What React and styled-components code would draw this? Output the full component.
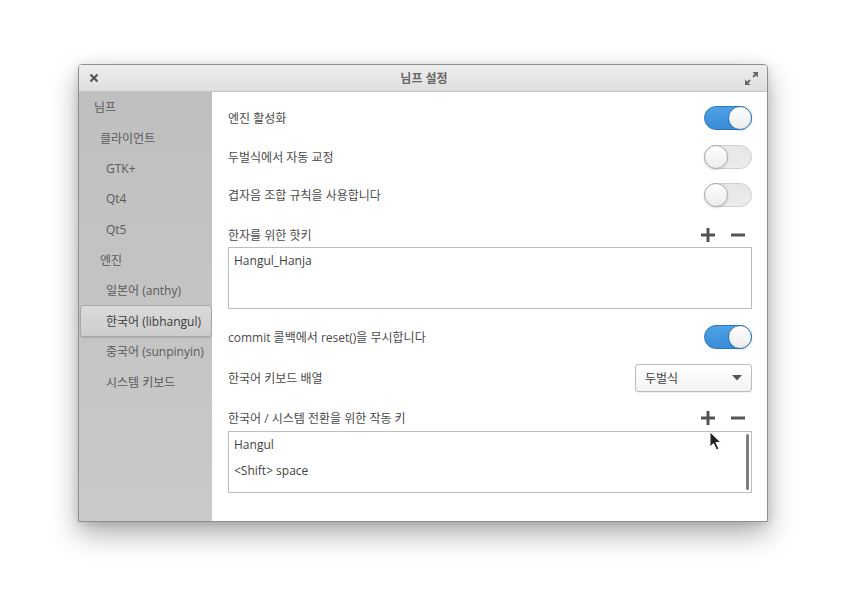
import React from 'react';
import styled, { createGlobalStyle } from 'styled-components';

const GlobalStyle = createGlobalStyle`
  html, body {
    margin: 0;
    padding: 0;
    background: #ffffff;
  }
  body {
    font-family: "Open Sans", "Noto Sans CJK KR", sans-serif;
    font-size: 12px;
    color: #4a4a4a;
  }
`;

const Page = styled.div`
  width: 846px;
  height: 614px;
  padding: 64px 0 0 78px;
  box-sizing: border-box;
`;

const Window = styled.div`
  position: relative;
  width: 690px;
  height: 458px;
  border: 1px solid #8f8f8f;
  border-radius: 4px 4px 0 0;
  box-sizing: border-box;
  display: flex;
  flex-direction: column;
  overflow: hidden;
  box-shadow: 0 12px 28px rgba(0, 0, 0, 0.32), 0 2px 8px rgba(0, 0, 0, 0.12);
`;

const TitleBar = styled.div`
  height: 26px;
  flex: none;
  display: flex;
  align-items: center;
  justify-content: space-between;
  padding: 0 9px 0 10px;
  background: linear-gradient(#eeeeee, #dedede);
  border-bottom: 1px solid #c4c4c4;
`;

const Title = styled.div`
  font-weight: bold;
  color: #666666;
  font-size: 12px;
  padding-left: 4px;
`;

const TitleIcon = styled.svg`
  display: block;
`;

const Body = styled.div`
  flex: 1;
  display: flex;
  min-height: 0;
`;

const Sidebar = styled.div`
  width: 133px;
  flex: none;
  background: linear-gradient(#bfbfbf, #c9c9c9);
  padding-top: 0;
  box-sizing: border-box;
`;

const NavItem = styled.div`
  height: 30.5px;
  display: flex;
  align-items: center;
  white-space: nowrap;
  padding-left: ${(p) => 14 + p.level * 6}px;
  color: ${(p) => (p.selected ? '#3c3c3c' : '#5a5a5a')};
  margin-left: 1px;
  box-sizing: border-box;
  ${(p) =>
    p.selected &&
    `
    height: 32px;
    margin-top: -1px;
    margin-bottom: -0.5px;
    background: linear-gradient(#dadada, #cdcdcd);
    border: 1px solid #a6a6a6;
    border-radius: 3px;
    padding-left: ${13 + p.level * 6}px;
    box-shadow: 0 1px 1px rgba(0,0,0,0.12);
  `}
`;

const Content = styled.div`
  flex: 1;
  background: #ffffff;
  padding: 14px 15px 0 16px;
  position: relative;
`;

const Row = styled.div`
  display: flex;
  align-items: center;
  justify-content: space-between;
  height: ${(p) => p.h || 24}px;
  margin-top: ${(p) => p.mt || 0}px;
`;

const Label = styled.span`
  color: #4a4a4a;
`;

const ToggleTrack = styled.div`
  width: 48px;
  height: 24px;
  border-radius: 12px;
  box-sizing: border-box;
  position: relative;
  background: ${(p) => (p.on ? 'linear-gradient(#4da3e6, #3a8cd6)' : 'linear-gradient(#e6e6e6, #ececec)')};
  border: 1px solid ${(p) => (p.on ? '#2f78bb' : '#cfcfcf')};
`;

const ToggleKnob = styled.div`
  position: absolute;
  top: -1px;
  ${(p) => (p.on ? 'right: -1px;' : 'left: -1px;')}
  width: 24px;
  height: 24px;
  border-radius: 50%;
  box-sizing: border-box;
  background: linear-gradient(#ffffff, #ececec);
  border: 1px solid ${(p) => (p.on ? '#2f78bb' : '#a9a9a9')};
  box-shadow: 0 1px 2px rgba(0, 0, 0, 0.15);
`;

const Toggle = ({ on }) => (
  <ToggleTrack on={on}>
    <ToggleKnob on={on} />
  </ToggleTrack>
);

const IconGroup = styled.div`
  display: flex;
  gap: 16px;
  padding-right: 7px;
`;

const ListBox = styled.div`
  position: relative;
  height: 62px;
  margin-top: ${(p) => p.mt || 0}px;
  border: 1px solid #bdbdbd;
  box-sizing: border-box;
  padding: 0 5px;
`;

const ListItem = styled.div`
  height: 26px;
  line-height: 26px;
  color: #3f3f3f;
`;

const ScrollBar = styled.div`
  position: absolute;
  right: 2px;
  top: 2px;
  bottom: 2px;
  width: 3px;
  border-radius: 2px;
  background: #7d7d7d;
`;

const Select = styled.div`
  width: 117px;
  height: 28px;
  box-sizing: border-box;
  border: 1px solid #bcbcbc;
  border-radius: 3px;
  background: linear-gradient(#ffffff, #f3f3f3);
  display: flex;
  align-items: center;
  justify-content: space-between;
  padding: 0 9px 0 9px;
  color: #3f3f3f;
  box-shadow: 0 1px 1px rgba(0, 0, 0, 0.06);
`;

const Cursor = styled.svg`
  position: absolute;
  left: 497px;
  top: 339px;
`;

const PlusIcon = () => (
  <svg width="14" height="14" viewBox="0 0 14 14">
    <rect x="5.5" y="0" width="3" height="14" fill="#555" />
    <rect x="0" y="5.5" width="14" height="3" fill="#555" />
  </svg>
);

const MinusIcon = () => (
  <svg width="14" height="14" viewBox="0 0 14 14">
    <rect x="0" y="5.5" width="14" height="3" fill="#555" />
  </svg>
);

const nav = [
  { text: '님프', level: 0 },
  { text: '클라이언트', level: 1 },
  { text: 'GTK+', level: 2 },
  { text: 'Qt4', level: 2 },
  { text: 'Qt5', level: 2 },
  { text: '엔진', level: 1 },
  { text: '일본어 (anthy)', level: 2 },
  { text: '한국어 (libhangul)', level: 2, selected: true },
  { text: '중국어 (sunpinyin)', level: 2 },
  { text: '시스템 키보드', level: 2 },
];

export default function App() {
  return (
    <>
      <GlobalStyle />
      <Page>
        <Window>
          <TitleBar>
            <TitleIcon width="10" height="10" viewBox="0 0 10 10">
              <path d="M1.5 1.5 L8.5 8.5 M8.5 1.5 L1.5 8.5" stroke="#555" strokeWidth="2.2" />
            </TitleIcon>
            <Title>님프 설정</Title>
            <TitleIcon width="13" height="13" viewBox="0 0 13 13">
              <path d="M7.5 0 H13 V5.5 Z" fill="#666" />
              <path d="M0 7.5 V13 H5.5 Z" fill="#666" />
              <path d="M10.5 2.5 L8 5 M2.5 10.5 L5 8" stroke="#666" strokeWidth="1.8" />
            </TitleIcon>
          </TitleBar>
          <Body>
            <Sidebar>
              {nav.map((n) => (
                <NavItem key={n.text} level={n.level} selected={n.selected}>
                  {n.text}
                </NavItem>
              ))}
            </Sidebar>
            <Content>
              <Row>
                <Label>엔진 활성화</Label>
                <Toggle on />
              </Row>
              <Row mt={14.5}>
                <Label>두벌식에서 자동 교정</Label>
                <Toggle />
              </Row>
              <Row mt={14.5}>
                <Label>겹자음 조합 규칙을 사용합니다</Label>
                <Toggle />
              </Row>
              <Row h={20} mt={18}>
                <Label>한자를 위한 핫키</Label>
                <IconGroup>
                  <PlusIcon />
                  <MinusIcon />
                </IconGroup>
              </Row>
              <ListBox mt={2}>
                <ListItem>Hangul_Hanja</ListItem>
              </ListBox>
              <Row mt={16}>
                <Label>commit 콜백에서 reset()을 무시합니다</Label>
                <Toggle on />
              </Row>
              <Row h={28} mt={15}>
                <Label>한국어 키보드 배열</Label>
                <Select>
                  <span>두벌식</span>
                  <svg width="10" height="6" viewBox="0 0 10 6">
                    <path d="M0 0 H10 L5 5.5 Z" fill="#555" />
                  </svg>
                </Select>
              </Row>
              <Row h={20} mt={16}>
                <Label>한국어 / 시스템 전환을 위한 작동 키</Label>
                <IconGroup>
                  <PlusIcon />
                  <MinusIcon />
                </IconGroup>
              </Row>
              <ListBox mt={3}>
                <ListItem>Hangul</ListItem>
                <ListItem>&lt;Shift&gt; space</ListItem>
                <ScrollBar />
              </ListBox>
              <Cursor width="14" height="22" viewBox="0 0 14 22">
                <path d="M1 1 V16 L4.5 12.5 L7.5 19 L10 18 L7 11.5 H12 Z" fill="#222" stroke="#fff" strokeWidth="1" />
              </Cursor>
            </Content>
          </Body>
        </Window>
      </Page>
    </>
  );
}
